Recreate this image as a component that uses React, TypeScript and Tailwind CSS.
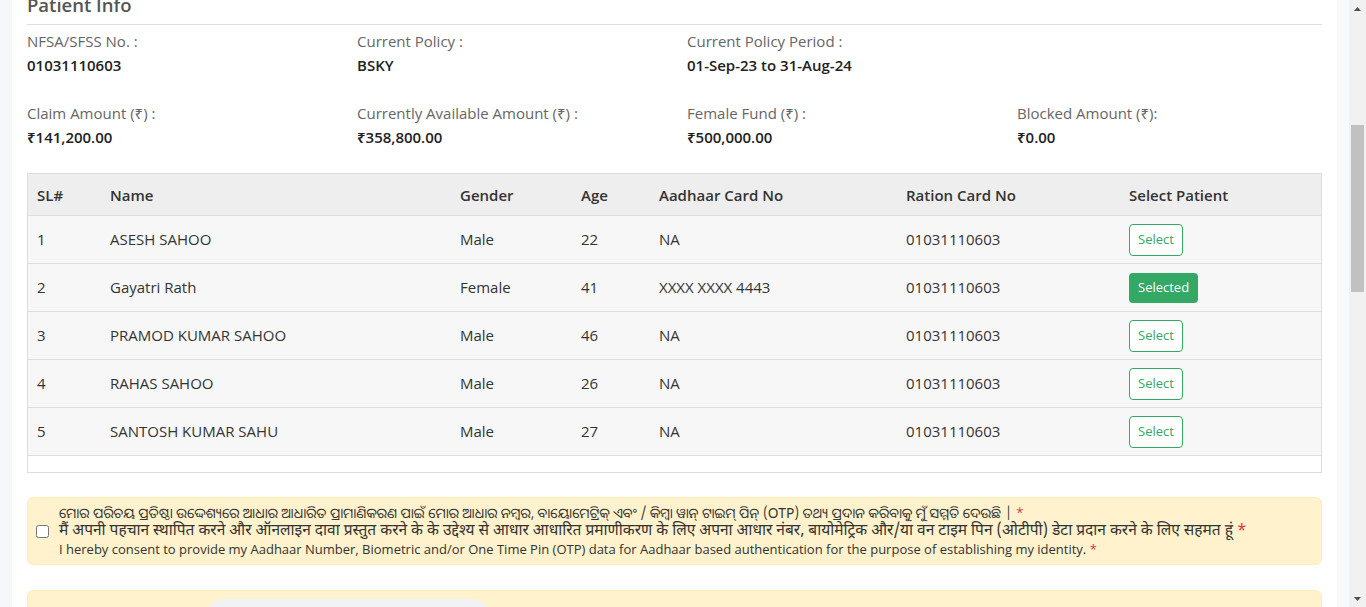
import React from "react";

const font = { fontFamily: '"Open Sans", "Noto Sans", "Liberation Sans", sans-serif' };

type P = { sl: number; name: string; gender: string; age: number; aadhaar: string; ration: string; selected?: boolean };

const patients: P[] = [
  { sl: 1, name: "ASESH SAHOO", gender: "Male", age: 22, aadhaar: "NA", ration: "01031110603" },
  { sl: 2, name: "Gayatri Rath", gender: "Female", age: 41, aadhaar: "XXXX XXXX 4443", ration: "01031110603", selected: true },
  { sl: 3, name: "PRAMOD KUMAR SAHOO", gender: "Male", age: 46, aadhaar: "NA", ration: "01031110603" },
  { sl: 4, name: "RAHAS SAHOO", gender: "Male", age: 26, aadhaar: "NA", ration: "01031110603" },
  { sl: 5, name: "SANTOSH KUMAR SAHU", gender: "Male", age: 27, aadhaar: "NA", ration: "01031110603" },
];

function Field({ label, value }: { label: string; value?: string }) {
  return (
    <div className="flex flex-col gap-[2px]">
      <div className="text-[15px] leading-[22px] text-[#666]">{label}</div>
      <div className="text-[15px] leading-[22px] font-semibold text-[#222]">{value ?? "\u00a0"}</div>
    </div>
  );
}

const gridCols = "grid grid-cols-[73px_350px_121px_78px_247px_223px_1fr]";

export default function App() {
  return (
    <div className="flex h-[607px] w-[1366px] overflow-hidden bg-[#f4f6fa]" style={font}>
      <div className="w-[12px] shrink-0 bg-[#f5f7fb]" />
      <div className="w-[1325px] shrink-0 bg-white px-[15px]">
        <div className="mt-[-6px] border-b border-[#dedede] pb-[8px] text-[18.5px] leading-[22px] font-semibold text-[#555]">
          Patient Info
        </div>

        <div className="mt-[5px] grid grid-cols-[330px_330px_330px_1fr]">
          <Field label="NFSA/SFSS No. :" value="01031110603" />
          <Field label="Current Policy :" value="BSKY" />
          <Field label="Current Policy Period :" value="01-Sep-23 to 31-Aug-24" />
          <div />
        </div>
        <div className="mt-[26px] grid grid-cols-[330px_330px_330px_1fr]">
          <Field label="Claim Amount (₹) :" value="₹141,200.00" />
          <Field label="Currently Available Amount (₹) :" value="₹358,800.00" />
          <Field label="Female Fund (₹) :" value="₹500,000.00" />
          <Field label="Blocked Amount (₹):" value="₹0.00" />
        </div>

        <div className="mt-[25px] border border-[#dddddd] text-[15px] text-[#333]">
          <div className={`${gridCols} h-[42px] items-center border-b border-[#dddddd] bg-[#eeeeee] pt-[1px] font-semibold`}>
            <div className="pl-[9px]">SL#</div>
            <div className="pl-[9px]">Name</div>
            <div className="pl-[9px]">Gender</div>
            <div className="pl-[9px]">Age</div>
            <div className="pl-[9px]">Aadhaar Card No</div>
            <div className="pl-[9px]">Ration Card No</div>
            <div className="pl-[9px]">Select Patient</div>
          </div>
          {patients.map((p) => (
            <div key={p.sl} className={`${gridCols} h-[48px] items-center border-b border-[#dddddd] bg-[#f7f7f7]`}>
              <div className="pl-[9px]">{p.sl}</div>
              <div className="pl-[9px]">{p.name}</div>
              <div className="pl-[9px]">{p.gender}</div>
              <div className="pl-[9px]">{p.age}</div>
              <div className="pl-[9px]">{p.aadhaar}</div>
              <div className="pl-[9px]">{p.ration}</div>
              <div className="pl-[9px]">
                {p.selected ? (
                  <button className="h-[30px] rounded-[4px] bg-[#34a865] px-[9px] text-[13px] text-white">Selected</button>
                ) : (
                  <button className="h-[32px] rounded-[4px] border border-[#34a865] bg-white px-[8px] text-[13px] text-[#34a865]">Select</button>
                )}
              </div>
            </div>
          ))}
          <div className="h-[16px] bg-white" />
        </div>

        <div className="mt-[24px] flex items-center rounded-[6px] border border-[#ffeeba] bg-[#fff2cc] py-[6px] pl-[8px]">
          <input type="checkbox" className="h-[13px] w-[13px] shrink-0" />
          <div className="ml-[10px] flex flex-col text-[#333]">
            <div className="text-[13.8px] leading-[18px]" style={{ fontFamily: '"Noto Sans Oriya", "Noto Sans", sans-serif' }}>
              ମୋର ପରିଚୟ ପ୍ରତିଷ୍ଠା ଉଦ୍ଦେଶ୍ୟରେ ଆଧାର ଆଧାରିତ ପ୍ରାମାଣିକରଣ ପାଇଁ ମୋର ଆଧାର ନମ୍ବର, ବାୟୋମେଟ୍ରିକ୍ ଏବଂ / କିମ୍ବା ୱାନ୍ ଟାଇମ୍ ପିନ୍ (OTP) ତଥ୍ୟ ପ୍ରଦାନ କରିବାକୁ ମୁଁ ସମ୍ମତି ଦେଉଛି | <span className="text-[#dc3545]">*</span>
            </div>
            <div className="text-[15.5px] leading-[18px]" style={{ fontFamily: '"Noto Sans Devanagari", "Noto Sans", sans-serif' }}>
              मैं अपनी पहचान स्थापित करने और ऑनलाइन दावा प्रस्तुत करने के के उद्देश्य से आधार आधारित प्रमाणीकरण के लिए अपना आधार नंबर, बायोमेट्रिक और/या वन टाइम पिन (ओटीपी) डेटा प्रदान करने के लिए सहमत हूं <span className="text-[#dc3545]">*</span>
            </div>
            <div className="text-[13px] leading-[18px]">
              I hereby consent to provide my Aadhaar Number, Biometric and/or One Time Pin (OTP) data for Aadhaar based authentication for the purpose of establishing my identity. <span className="text-[#dc3545]">*</span>
            </div>
          </div>
        </div>

        <div className="mt-[25px] h-[60px] rounded-t-[6px] border border-[#ffeeba] bg-[#fff2cc] pl-[177px] pt-[8px]">
          <div className="h-[40px] w-[286px] rounded-t-[20px] bg-[#f1f2f4]" />
        </div>
      </div>
      <div className="w-[12px] shrink-0 bg-[#f7f9fb]" />
      <div className="flex w-[17px] shrink-0 flex-col items-center bg-[#f1f1f1]">
        <div className="flex h-[17px] items-center justify-center">
          <svg width="7" height="4" viewBox="0 0 7 4"><path d="M0 4 L3.5 0 L7 4 Z" fill="#505050" /></svg>
        </div>
        <div className="mt-[108px] h-[167px] w-[13px] bg-[#c1c1c1]" />
        <div className="flex-1" />
        <div className="flex h-[17px] items-center justify-center">
          <svg width="7" height="4" viewBox="0 0 7 4"><path d="M0 0 L3.5 4 L7 0 Z" fill="#505050" /></svg>
        </div>
      </div>
    </div>
  );
}
